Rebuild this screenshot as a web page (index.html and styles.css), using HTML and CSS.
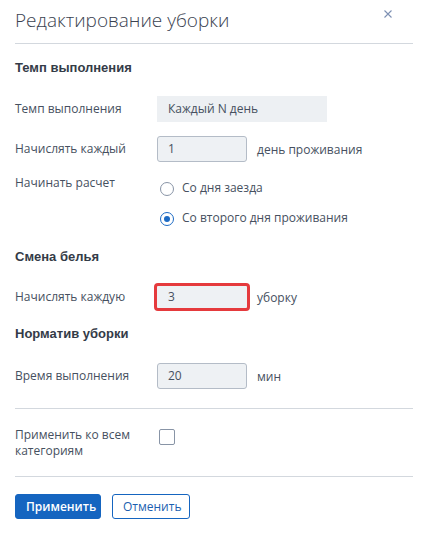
FILE: index.html
```html
<!DOCTYPE html>
<html lang="ru">
<head>
<meta charset="utf-8">
<link rel="stylesheet" href="styles.css">
</head>
<body>
<div class="dialog">
  <div class="header">
    <h1 class="title">Редактирование уборки</h1>
    <button class="close" aria-label="Закрыть">
      <svg width="8" height="8" viewBox="0 0 8 8"><path d="M0.5 0.5L7.5 7.5M7.5 0.5L0.5 7.5" stroke="#7d90b3" stroke-width="1.1" fill="none"/></svg>
    </button>
  </div>

  <h2 class="section">Темп выполнения</h2>
  <div class="row row-first">
    <div class="label">Темп выполнения</div>
    <div class="field"><div class="select">Каждый N день</div></div>
  </div>
  <div class="row row-second">
    <div class="label">Начислять каждый</div>
    <div class="field"><div class="input">1</div><span class="unit">день проживания</span></div>
  </div>
  <div class="row row-top">
    <div class="label">Начинать расчет</div>
    <div class="radios">
      <div class="radio"><span class="dot"></span><span>Со дня заезда</span></div>
      <div class="radio"><span class="dot checked"></span><span>Со второго дня проживания</span></div>
    </div>
  </div>

  <h2 class="section sec2">Смена белья</h2>
  <div class="row row-first2">
    <div class="label">Начислять каждую</div>
    <div class="field"><div class="input error">3</div><span class="unit">уборку</span></div>
  </div>

  <h2 class="section sec3">Норматив уборки</h2>
  <div class="row row-first3">
    <div class="label">Время выполнения</div>
    <div class="field"><div class="input">20</div><span class="unit">мин</span></div>
  </div>

  <hr class="sep sep1">
  <div class="row row-check">
    <div class="label">Применить ко всем категориям</div>
    <div class="field"><span class="checkbox"></span></div>
  </div>
  <hr class="sep sep2">

  <div class="actions">
    <button class="btn primary">Применить</button>
    <button class="btn secondary">Отменить</button>
  </div>
</div>
</body>
</html>
```

FILE: styles.css
```css
html, body {
  margin: 0;
  padding: 0;
  background: #fff;
}
body {
  font-family: "Open Sans", "Liberation Sans", sans-serif;
  font-size: 12px;
  color: #465060;
}
.dialog {
  padding: 0 15px;
  width: 398px;
}
.header {
  display: flex;
  justify-content: space-between;
  align-items: flex-start;
  border-bottom: 1px solid #d3d8de;
  height: 43px;
}
.title {
  margin: 6px 0 0 0;
  font-weight: 300;
  font-size: 19px;
  color: #3a4250;
  line-height: 28px;
}
.close {
  border: 0;
  background: none;
  padding: 0;
  margin: 10px 21px 0 0;
  width: 8px;
  height: 8px;
  line-height: 0;
}
.section {
  margin: 0;
  font-family: "Liberation Sans", Arial, sans-serif;
  font-weight: bold;
  font-size: 13px;
  color: #343b47;
  line-height: 16px;
  padding-top: 16px;
}
.row {
  display: flex;
  align-items: center;
  margin-top: 16px;
}
.label {
  width: 142px;
  flex-shrink: 0;
  line-height: 16px;
}
.field {
  display: flex;
  align-items: center;
  gap: 10px;
}
.row-first { margin-top: 20px; }
.row-second { margin-top: 14px; }
.select {
  width: 159px;
  height: 26px;
  background: #edf0f3;
  padding-left: 11px;
  line-height: 26px;
  color: #465060;
}
.input {
  width: 78px;
  height: 24px;
  border: 1px solid #b4bcc7;
  border-radius: 3px;
  background: #eef1f4;
  padding-left: 10px;
  line-height: 24px;
  color: #465060;
}
.input.error {
  border: 3px solid #e53a3d;
  width: 79px;
  height: 22px;
  line-height: 22px;
  padding-left: 11px;
  margin-left: -3px;
  margin-right: -3px;
  border-radius: 4px;
}
.row-top { align-items: flex-start; margin-top: 13px; }
.radios {
  display: flex;
  flex-direction: column;
  gap: 13px;
  padding-top: 4px;
}
.radio {
  display: flex;
  align-items: center;
  gap: 8px;
  margin-left: 3px;
  line-height: 16px;
}
.dot {
  width: 14px;
  height: 14px;
  border: 1px solid #8894a6;
  border-radius: 50%;
  box-sizing: border-box;
  position: relative;
  flex-shrink: 0;
  margin-top: 3px;
}
.dot.checked {
  border-color: #1c6ac4;
}
.dot.checked::after {
  content: "";
  position: absolute;
  left: 3px;
  top: 3px;
  width: 6px;
  height: 6px;
  border-radius: 50%;
  background: #1c6ac4;
}
.sec2 { padding-top: 23px; }
.row-first2 { margin-top: 18px; }
.sec3 { padding-top: 15px; }
.row-first3 { margin-top: 21px; }
.sep {
  border: 0;
  border-top: 1px solid #d3d8de;
  margin: 0;
}
.sep1 { margin-top: 19px; }
.row-check { align-items: flex-start; margin-top: 18px; }
.row-check .label { width: 130px; margin-right: 14px; }
.checkbox {
  display: block;
  width: 14px;
  height: 14px;
  border: 1px solid #8894a6;
  border-radius: 2px;
  margin-top: 2px;
}
.sep2 { margin-top: 17px; }
.actions {
  display: flex;
  gap: 11px;
  margin-top: 17px;
}
.btn {
  font-family: "Open Sans", "Liberation Sans", sans-serif;
  font-size: 12px;
  height: 25px;
  border-radius: 3px;
  padding: 0 10px;
  cursor: pointer;
}
.primary {
  background: #1565c0;
  border: 1px solid #1565c0;
  color: #fff;
  font-weight: 600;
  width: 86px;
}
.secondary {
  background: #fff;
  border: 1px solid #1565c0;
  color: #1b5fb0;
  width: 78px;
}
```
